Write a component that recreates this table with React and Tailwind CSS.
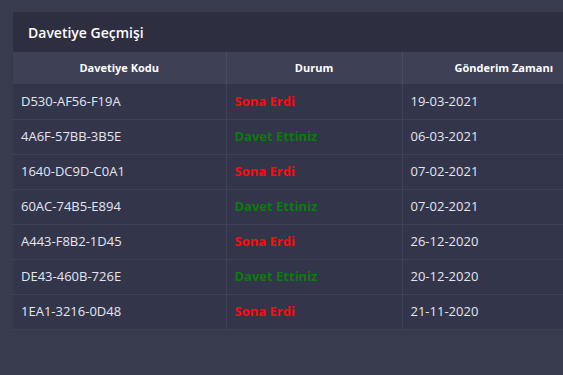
import React from "react";

const rows = [
  ["D530-AF56-F19A", "Sona Erdi", "19-03-2021"],
  ["4A6F-57BB-3B5E", "Davet Ettiniz", "06-03-2021"],
  ["1640-DC9D-C0A1", "Sona Erdi", "07-02-2021"],
  ["60AC-74B5-E894", "Davet Ettiniz", "07-02-2021"],
  ["A443-F8B2-1D45", "Sona Erdi", "26-12-2020"],
  ["DE43-460B-726E", "Davet Ettiniz", "20-12-2020"],
  ["1EA1-3216-0D48", "Sona Erdi", "21-11-2020"],
];

export default function App() {
  return (
    <div
      className="w-[563px] h-[375px] overflow-hidden bg-[#383a4e] pt-[12px] pl-[13px]"
      style={{ fontFamily: '"Open Sans", sans-serif' }}
    >
      <div className="w-[620px]">
        <div className="h-[40px] bg-[#2d2e3f] flex items-center pl-[15px]">
          <span className="text-[14px] font-semibold text-white">Davetiye Geçmişi</span>
        </div>
        <table className="border-collapse table-fixed w-[620px]">
          <colgroup>
            <col className="w-[213px]" />
            <col className="w-[176px]" />
            <col className="w-[231px]" />
          </colgroup>
          <thead>
            <tr className="h-[32px] bg-[#3e4055]">
              <th className="text-[11px] font-bold text-white text-center border-r border-[#4a4c62]">Davetiye Kodu</th>
              <th className="text-[11px] font-bold text-white text-center border-r border-[#4a4c62]">Durum</th>
              <th className="text-[11px] font-bold text-white text-left pl-[52px]">Gönderim Zamanı</th>
            </tr>
          </thead>
          <tbody>
            {rows.map((r, i) => (
              <tr key={i} className="h-[35px] bg-[#33354a] border-b border-[#3f4157]">
                <td className="pl-[8px] text-[13px] text-[#e4e6f2] border-r border-[#3f4157]">{r[0]}</td>
                <td
                  className={
                    "pl-[8px] text-[13px] font-bold border-r border-[#3f4157] " +
                    (r[1] === "Sona Erdi" ? "text-[#ff0a0a]" : "text-[#0b7d0b]")
                  }
                >
                  {r[1]}
                </td>
                <td className="pl-[8px] text-[13px] text-[#e4e6f2]">{r[2]}</td>
              </tr>
            ))}
          </tbody>
        </table>
      </div>
    </div>
  );
}
